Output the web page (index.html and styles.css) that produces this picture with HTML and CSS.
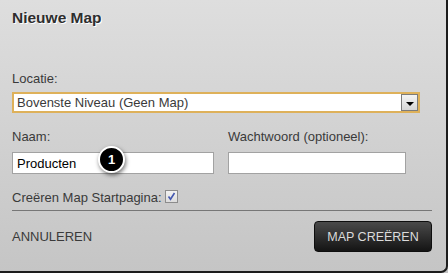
FILE: index.html
```html
<!DOCTYPE html>
<html lang="nl">
<head>
    <meta charset="UTF-8">
    <title>Nieuwe Map</title>
    <link rel="stylesheet" href="styles.css">
</head>
<body>
    <div class="dialog">
        <h2 class="dialog-title">Nieuwe Map</h2>

        <!-- Locatie -->
        <label class="field-label label-first">Locatie:</label>
        <div class="select">
            <span class="select-text">Bovenste Niveau (Geen Map)</span>
            <span class="select-arrow"></span>
        </div>

        <!-- Naam + wachtwoord -->
        <div class="row-fields">
            <div class="field">
                <label class="field-label">Naam:</label>
                <div class="input-wrap">
                    <input type="text" class="text-input" value="Producten">
                    <span class="badge">1</span>
                </div>
            </div>
            <div class="field">
                <label class="field-label">Wachtwoord (optioneel):</label>
                <input type="password" class="text-input input-short">
            </div>
        </div>

        <div class="check-row">
            <span>Creëren Map Startpagina:</span>
            <span class="checkbox">
                <svg width="11" height="11" viewBox="0 0 11 11"><path d="M2.5 5.5 L4.5 8.3 L8.5 2" fill="none" stroke="#4458b0" stroke-width="1.6"/></svg>
            </span>
        </div>

        <div class="footer">
            <a class="cancel">ANNULEREN</a>
            <button class="btn-create">MAP CREËREN</button>
        </div>
    </div>
</body>
</html>
```

FILE: styles.css
```css
body {
    margin: 0;
    width: 448px;
    height: 273px;
    overflow: hidden;
    font-family: "Liberation Sans", Arial, sans-serif;
    background: #c4c4c4;
}

.dialog {
    box-sizing: border-box;
    width: 448px;
    height: 273px;
    padding: 9px 14px 0 12px;
    background: linear-gradient(to bottom, #dedede, #c5c5c5);
    border-right: 2px solid #1c1c1c;
    border-bottom: 2px solid #1c1c1c;
    border-bottom-right-radius: 7px;
    color: #3a3a3a;
}

.dialog-title {
    margin: 0;
    font-size: 15.5px;
    line-height: 18px;
    font-weight: bold;
    color: #2e2e2e;
    text-shadow: 1px 1px 0 #fff;
}

.field-label {
    display: block;
    font-size: 13px;
    line-height: 15px;
    margin-bottom: 8px;
}

.label-first {
    margin-top: 44px;
    margin-bottom: 6px;
}

.select {
    box-sizing: border-box;
    width: 408px;
    height: 21px;
    border: 2px solid #deb15a;
    background: #fff;
    display: flex;
    align-items: center;
    justify-content: space-between;
    padding: 0 0 0 3px;
    font-size: 13px;
}

.select-arrow {
    box-sizing: border-box;
    width: 17px;
    height: 17px;
    border: 1px solid #7c7c7c;
    background: linear-gradient(to bottom, #f4f4f4, #d6d6d6);
    display: flex;
    align-items: center;
    justify-content: center;
}

.select-arrow::after {
    content: "";
    border-left: 4px solid transparent;
    border-right: 4px solid transparent;
    border-top: 4px solid #000;
    margin-top: 2px;
}

.row-fields {
    display: grid;
    grid-template-columns: 202px 178px;
    column-gap: 14px;
    margin-top: 16px;
}

.input-wrap {
    position: relative;
}

.text-input {
    box-sizing: border-box;
    width: 100%;
    height: 22px;
    border: 1px solid #a2a2a2;
    background: #fff;
    padding: 0 4px;
    margin: 0;
    font-family: "Liberation Sans", Arial, sans-serif;
    font-size: 13px;
    color: #000;
    outline: none;
}

.badge {
    position: absolute;
    left: 86px;
    top: -6px;
    width: 23px;
    height: 23px;
    border: 2px solid #fff;
    border-radius: 50%;
    background: #000;
    color: #fff;
    font-size: 13px;
    font-weight: bold;
    line-height: 23px;
    text-align: center;
    box-shadow: 1px 2px 4px rgba(0, 0, 0, 0.55);
}

.check-row {
    display: flex;
    align-items: center;
    gap: 3px;
    margin-top: 16px;
    height: 15px;
    font-size: 13px;
    border-bottom: 1px solid #777;
    padding-bottom: 5px;
}

.checkbox {
    box-sizing: border-box;
    width: 13px;
    height: 13px;
    margin-top: -3px;
    border: 1px solid #8c8c8c;
    background: linear-gradient(to bottom, #f2f2f2, #dcdcdc);
    display: flex;
    align-items: center;
    justify-content: center;
}

.footer {
    display: flex;
    justify-content: space-between;
    align-items: center;
    margin-top: 10px;
}

.cancel {
    font-size: 13px;
    color: #3a3a3a;
}

.btn-create {
    width: 118px;
    height: 31px;
    border: 1px solid #0e0e0e;
    border-radius: 4px;
    background: linear-gradient(to bottom, #4a4a4a, #141414);
    color: #dcdcdc;
    font-family: "Liberation Sans", Arial, sans-serif;
    font-size: 12.5px;
    padding: 0;
    cursor: pointer;
}
```
